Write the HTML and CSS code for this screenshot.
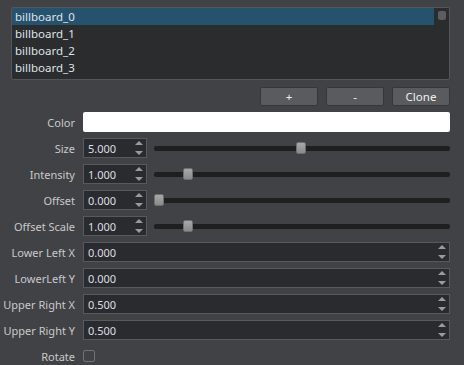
FILE: index.html
```html
<!DOCTYPE html>
<html>
<head>
<meta charset="utf-8">
<link rel="stylesheet" href="styles.css">
</head>
<body>
<div class="panel">
  <div class="list">
    <div class="items">
      <div class="item sel">billboard_0</div>
      <div class="item">billboard_1</div>
      <div class="item">billboard_2</div>
      <div class="item">billboard_3</div>
    </div>
    <div class="vscroll"><div class="vhandle"></div></div>
  </div>
  <div class="buttons">
    <div class="btn">+</div>
    <div class="btn">-</div>
    <div class="btn">Clone</div>
  </div>
  <div class="form">
    <div class="row"><div class="label">Color</div><div class="color"></div></div>
    <div class="row"><div class="label">Size</div>
      <div class="spin small"><span class="val">5.000</span><span class="arrows"><i class="up"></i><i class="down"></i></span></div>
      <div class="slider"><div class="groove"></div><div class="handle" style="left:142px"></div></div>
    </div>
    <div class="row"><div class="label">Intensity</div>
      <div class="spin small"><span class="val">1.000</span><span class="arrows"><i class="up"></i><i class="down"></i></span></div>
      <div class="slider"><div class="groove"></div><div class="handle" style="left:29px"></div></div>
    </div>
    <div class="row"><div class="label">Offset</div>
      <div class="spin small"><span class="val">0.000</span><span class="arrows"><i class="up"></i><i class="down"></i></span></div>
      <div class="slider"><div class="groove"></div><div class="handle" style="left:0px"></div></div>
    </div>
    <div class="row"><div class="label">Offset Scale</div>
      <div class="spin small"><span class="val">1.000</span><span class="arrows"><i class="up"></i><i class="down"></i></span></div>
      <div class="slider"><div class="groove"></div><div class="handle" style="left:29px"></div></div>
    </div>
    <div class="row"><div class="label">Lower Left X</div>
      <div class="spin wide"><span class="val">0.000</span><span class="arrows"><i class="up"></i><i class="down"></i></span></div>
    </div>
    <div class="row"><div class="label">LowerLeft Y</div>
      <div class="spin wide"><span class="val">0.000</span><span class="arrows"><i class="up"></i><i class="down"></i></span></div>
    </div>
    <div class="row"><div class="label">Upper Right X</div>
      <div class="spin wide"><span class="val">0.500</span><span class="arrows"><i class="up"></i><i class="down"></i></span></div>
    </div>
    <div class="row"><div class="label">Upper Right Y</div>
      <div class="spin wide"><span class="val">0.500</span><span class="arrows"><i class="up"></i><i class="down"></i></span></div>
    </div>
    <div class="row check"><div class="label">Rotate</div><div class="checkbox"></div></div>
  </div>
</div>
</body>
</html>
```

FILE: styles.css
```css
html, body {
  margin: 0;
  padding: 0;
  background: #414246;
  width: 464px;
  height: 365px;
  overflow: hidden;
}
.panel {
  padding: 7px 14px 0 11px;
  font-family: "Noto Sans", sans-serif;
  font-size: 11px;
  color: #d0d0d0;
}
.list {
  height: 71px;
  border: 1px solid #55565a;
  border-radius: 2px;
  background: #2b2c2e;
  display: flex;
}
.items {
  flex: 1;
  display: flex;
  flex-direction: column;
}
.item {
  height: 17px;
  line-height: 17px;
  padding-left: 3px;
  font-size: 11.5px;
  color: #dde3ea;
}
.item.sel {
  background: #27526e;
}
.vscroll {
  width: 15px;
  display: flex;
  justify-content: center;
  padding-top: 3px;
}
.vhandle {
  width: 8px;
  height: 9px;
  border-radius: 2px;
  background: #5c5d61;
}
.buttons {
  display: flex;
  justify-content: flex-end;
  gap: 8px;
  margin-top: 7px;
}
.btn {
  width: 56px;
  height: 17px;
  line-height: 17px;
  text-align: center;
  border: 1px solid #36373a;
  border-radius: 2px;
  background: #5a5b5f;
  color: #f0f0f0;
  font-size: 11.5px;
}
.form {
  margin-top: 6px;
  display: flex;
  flex-direction: column;
  gap: 6px;
}
.row {
  display: flex;
  align-items: center;
  height: 20px;
}
.label {
  width: 64px;
  margin-right: 8px;
  display: flex;
  justify-content: flex-end;
  white-space: nowrap;
  color: #c9c9c9;
}
.color {
  flex: 1;
  height: 20px;
  background: #ffffff;
  border-radius: 2px;
}
.spin {
  box-sizing: border-box;
  height: 20px;
  border: 1px solid #58595d;
  background: #2a2b2e;
  display: flex;
  align-items: center;
  justify-content: space-between;
  padding: 0 3px 0 4px;
  color: #dcdfe3;
}
.spin.small {
  width: 64px;
}
.spin.wide {
  flex: 1;
}
.arrows {
  display: flex;
  flex-direction: column;
  justify-content: space-between;
  height: 14px;
  width: 8px;
  align-items: center;
}
.arrows i {
  display: block;
  width: 0;
  height: 0;
  border-left: 4px solid transparent;
  border-right: 4px solid transparent;
}
.arrows .up {
  border-bottom: 4px solid #9a9b9e;
}
.arrows .down {
  border-top: 4px solid #9a9b9e;
}
.slider {
  flex: 1;
  margin-left: 7px;
  height: 20px;
  position: relative;
  display: flex;
  align-items: center;
}
.groove {
  flex: 1;
  height: 5px;
  background: #1f1f20;
  border-radius: 2px;
}
.handle {
  position: absolute;
  top: 4px;
  width: 10px;
  height: 12px;
  box-sizing: border-box;
  border-radius: 2px;
  border: 1px solid #6e6f72;
  background: linear-gradient(#a8a8a8, #8a8a8a);
}
.checkbox {
  width: 12px;
  height: 12px;
  box-sizing: border-box;
  border: 1px solid #727377;
  border-radius: 2px;
}
```
